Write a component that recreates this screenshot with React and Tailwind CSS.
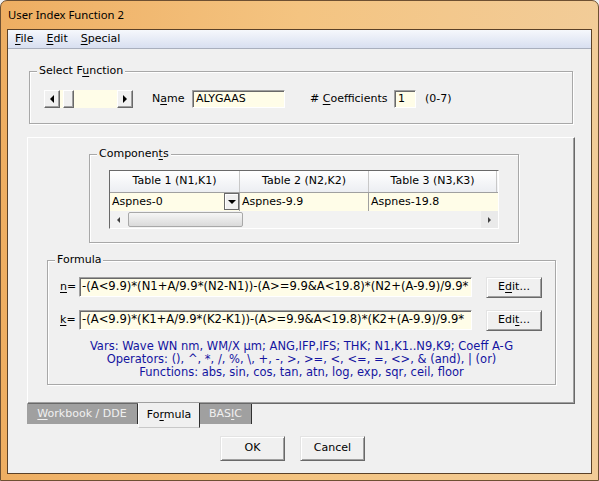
import React from 'react';

function U({ children }) {
  return <span className="underline underline-offset-[2px] decoration-1">{children}</span>;
}

function Tri({ dir, size = 4 }) {
  const pts = {
    left: `${size},0 ${size},${size * 2} 0,${size}`,
    right: `0,0 0,${size * 2} ${size},${size}`,
    down: `0,0 ${size * 2},0 ${size},${size}`,
  };
  const w = dir === 'down' ? size * 2 : size;
  const h = dir === 'down' ? size : size * 2;
  return (
    <svg width={w} height={h} viewBox={`0 0 ${w} ${h}`}>
      <polygon points={pts[dir]} fill="#000" />
    </svg>
  );
}

const raised =
  'bg-[#f0f0f0] border border-t-white border-l-white border-r-[#696969] border-b-[#696969] shadow-[inset_-1px_-1px_0_#a0a0a0]';
const sunken =
  'bg-[#fffde8] border border-t-[#a0a0a0] border-l-[#a0a0a0] border-r-white border-b-white shadow-[inset_1px_1px_0_#696969]';

function Group({ label, className, children }) {
  return (
    <div className={`relative border border-[#a8a8a8] shadow-[inset_1px_1px_0_#fff,1px_1px_0_#fff] ${className}`}>
      <span className="absolute -top-[8px] left-[7px] px-[2px] bg-[#f0f0f0] leading-[14px] text-black">
        {label}
      </span>
      {children}
    </div>
  );
}

function Button({ children, className }) {
  return (
    <button
      className={`flex items-center justify-center bg-[#f0f0f0] border border-t-[#e3e3e3] border-l-[#e3e3e3] border-r-[#696969] border-b-[#696969] shadow-[inset_1px_1px_0_#fff,inset_-1px_-1px_0_#a0a0a0] text-black ${className}`}
    >
      {children}
    </button>
  );
}

// only the part that shows in the edit box
const formulaN = '-(A<9.9)*(N1+A/9.9*(N2-N1))-(A>=9.9&A<19.8)*(N2+(A-9.9)/9.9*';
const formulaK = '-(A<9.9)*(K1+A/9.9*(K2-K1))-(A>=9.9&A<19.8)*(K2+(A-9.9)/9.9*';

export default function App() {
  return (
    <div className="w-[599px] h-[481px] bg-[#f0f0f0] font-['DejaVu_Sans',Verdana,sans-serif] text-[11px] text-black">
      <div className="w-[599px] h-[481px] rounded-t-[7px] border border-[#6e5032] bg-gradient-to-r from-[#eeae62] via-[#f4c481] to-[#f2cc98] overflow-hidden">
        {/* Title bar */}
        <div className="h-[28px] flex items-center pl-[7px] font-['Noto_Sans',sans-serif] text-[11.3px] text-black">
          User Index Function 2
        </div>

        {/* Client */}
        <div className="ml-[6px] w-[585px] h-[445px] border border-[#5b4128] bg-[#f0f0f0] flex flex-col">
          {/* Menu bar */}
          <div className="h-[19px] flex items-center gap-[13px] pl-[7px] bg-gradient-to-b from-[#f6f8fc] to-[#d8dff0] border-b border-[#a9afbd]">
            <span><U>F</U>ile</span>
            <span><U>E</U>dit</span>
            <span><U>S</U>pecial</span>
          </div>

          {/* Select Function */}
          <Group label={<>Select F<U>u</U>nction</>} className="mt-[22px] ml-[21px] w-[544px] h-[53px]">
            <div className="flex items-center pt-[18px] pl-[14px]">
              <div className="flex h-[18px] w-[89px] bg-[#fffde8]">
                <div className={`w-[16px] flex items-center justify-center ${raised}`}>
                  <Tri dir="left" />
                </div>
                <div className="w-[3px]" />
                <div className={`w-[11px] ${raised}`} />
                <div className="flex-1" />
                <div className={`w-[16px] flex items-center justify-center ${raised}`}>
                  <Tri dir="right" />
                </div>
              </div>
              <span className="ml-[19px] w-[40px]">N<U>a</U>me</span>
              <div className={`w-[93px] h-[18px] flex items-center pl-[3px] ${sunken}`}>ALYGAAS</div>
              <span className="ml-[25px] w-[84px]"># <U>C</U>oefficients</span>
              <div className={`w-[22px] h-[18px] flex items-center pl-[3px] ${sunken}`}>1</div>
              <span className="ml-[9px]">(0-7)</span>
            </div>
          </Group>

          {/* Tab panel */}
          <div className="mt-[13px] ml-[19px] w-[548px] h-[267px] border border-t-white border-l-white border-r-[#696969] border-b-[#696969] shadow-[inset_-1px_-1px_0_#a0a0a0] flex flex-col">
            {/* Components */}
            <Group label={<>Componen<U>t</U>s</>} className="mt-[16px] ml-[61px] w-[430px] h-[89px]">
              <div className="mt-[15px] ml-[19px] w-[390px] h-[59px] border border-t-[#696969] border-l-[#696969] border-r-white border-b-white bg-[#f4f4f4] flex flex-col overflow-hidden">
                <div className="h-[22px] flex border-b border-[#a0a0a0] bg-gradient-to-b from-white to-[#eceef2]">
                  <div className="w-[130px] flex items-center justify-center border-r border-[#c8c8c8]">Table 1 (N1,K1)</div>
                  <div className="w-[129px] flex items-center justify-center border-r border-[#c8c8c8]">Table 2 (N2,K2)</div>
                  <div className="w-[128px] flex items-center justify-center border-r border-[#c8c8c8]">Table 3 (N3,K3)</div>
                </div>
                <div className="h-[18px] flex bg-[#fffde8]">
                  <div className="w-[130px] flex items-center pl-[2px] border-r border-[#a0a0a0] relative">
                    Aspnes-0
                    <div className="absolute right-[0px] top-[0px] w-[15px] h-[17px] flex items-center justify-center bg-[#f0f0f0] border border-[#696969] shadow-[inset_1px_1px_0_#fff]">
                      <Tri dir="down" size={4} />
                    </div>
                  </div>
                  <div className="w-[129px] flex items-center pl-[2px] border-r border-[#a0a0a0]">Aspnes-9.9</div>
                  <div className="w-[128px] flex items-center pl-[2px]">Aspnes-19.8</div>
                </div>
                <div className="h-[17px] flex items-center bg-[#f2f2f2]">
                  <div className="w-[17px] flex items-center justify-center">
                    <svg width="3" height="6" viewBox="0 0 3 6"><polygon points="3,0 3,6 0,3" fill="#404040" /></svg>
                  </div>
                  <div className="ml-[1px] w-[115px] h-[15px] rounded-[2px] border border-[#a8a8a8] bg-gradient-to-b from-[#f6f6f6] to-[#dadada]" />
                  <div className="flex-1" />
                  <div className="w-[17px] h-[17px] flex items-center justify-center bg-[#eaeaea]">
                    <svg width="3" height="6" viewBox="0 0 3 6"><polygon points="0,0 0,6 3,3" fill="#404040" /></svg>
                  </div>
                </div>
              </div>
            </Group>

            {/* Formula */}
            <Group label="Formula" className="mt-[17px] ml-[19px] w-[509px] h-[125px]">
              <div className="pt-[16px] pl-[12px] flex flex-col gap-[13px]">
                <div className="flex items-center h-[20px]">
                  <span className="w-[19px]"><U>n</U>=</span>
                  <div className={`w-[393px] h-[20px] flex items-center pl-[2px] overflow-hidden whitespace-nowrap text-[11.6px] ${sunken}`}>{formulaN}</div>
                  <Button className="ml-[14px] w-[56px] h-[21px]">E<U>d</U>it...</Button>
                </div>
                <div className="flex items-center h-[20px]">
                  <span className="w-[19px]"><U>k</U>=</span>
                  <div className={`w-[393px] h-[20px] flex items-center pl-[2px] overflow-hidden whitespace-nowrap text-[11.6px] ${sunken}`}>{formulaK}</div>
                  <Button className="ml-[14px] w-[56px] h-[21px]">Edi<U>t</U>...</Button>
                </div>
              </div>
              <div className="mt-[10px] flex flex-col items-center leading-[13px] text-[11.5px] text-[#1414a0]">
                <span>Vars: Wave WN nm, WM/X µm; ANG,IFP,IFS; THK; N1,K1..N9,K9; Coeff A-G</span>
                <span>Operators: (), ^, *, /, %, \, +, -, &gt;, &gt;=, &lt;, &lt;=, =, &lt;&gt;, &amp; (and), | (or)</span>
                <span>Functions: abs, sin, cos, tan, atn, log, exp, sqr, ceil, floor</span>
              </div>
            </Group>
          </div>

          {/* Tabs */}
          <div className="ml-[19px] h-[24px] flex items-start">
            <div className="w-[111px] h-[20px] flex items-center justify-center bg-[#a0a0a0] text-[#f0f0f0] border-r border-[#303030]">
              <span><U>W</U>orkbook / DDE</span>
            </div>
            <div className="relative -mt-[1px] w-[62px] h-[25px] flex items-center justify-center bg-[#f0f0f0] border-l border-white border-r border-r-[#303030] border-b border-b-[#c8c8c8]">
              <span>Fo<U>r</U>mula</span>
            </div>
            <div className="w-[52px] h-[20px] flex items-center justify-center bg-[#a0a0a0] text-[#f0f0f0] border-r border-[#303030]">
              <span>BAS<U>I</U>C</span>
            </div>
          </div>

          {/* Buttons */}
          <div className="mt-[8px] ml-[212px] flex gap-[15px]">
            <Button className="w-[65px] h-[25px]">OK</Button>
            <Button className="w-[65px] h-[25px]">Cancel</Button>
          </div>
        </div>
      </div>
    </div>
  );
}
